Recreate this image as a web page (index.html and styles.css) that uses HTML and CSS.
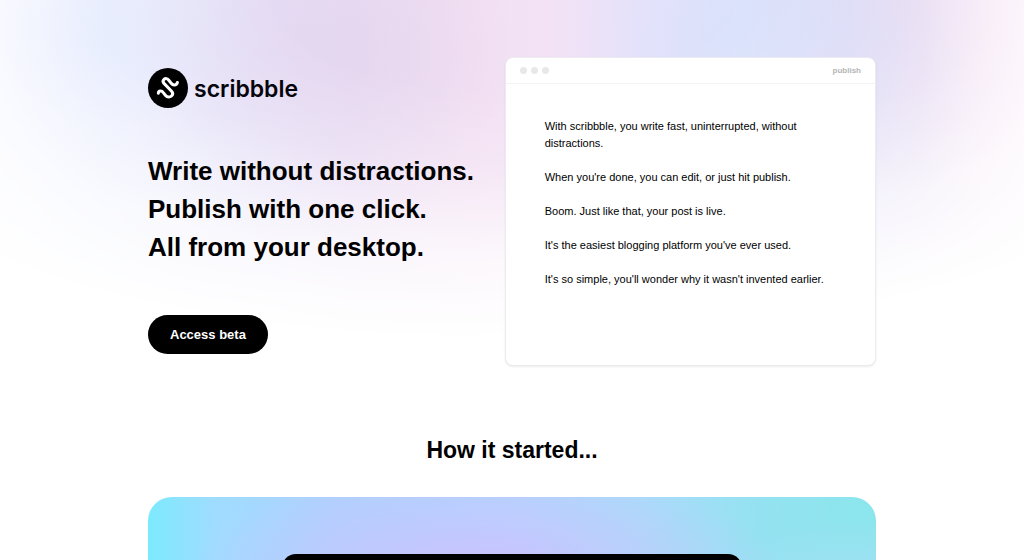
FILE: index.html
```html
<!DOCTYPE html>
<html lang="en">
<head>
<meta charset="utf-8">
<meta name="viewport" content="width=device-width, initial-scale=1">
<title>scribbble</title>
<link rel="stylesheet" href="styles.css">
</head>
<body>
<div class="page">
  <div class="glow" aria-hidden="true"></div>
  <main class="container">
    <section class="hero">
      <div class="intro">
        <div class="brand">
          <svg class="brand-mark" viewBox="0 0 40 40" aria-hidden="true">
            <circle cx="20" cy="20" r="20"/>
            <path d="M10.3 25.2C10.6 22.7 13.6 22.2 15.3 24.6L17.6 27.5C19.3 29.6 22 29.4 23.5 28C25 26.6 25 24.8 23.6 23.2L16 15.4C14.8 14 14.9 12.4 16 11.4C17.4 10.1 19.2 10.4 20.6 12L23.2 15.3C25.2 17.9 28.8 17.3 29.4 14.4"/>
          </svg>
          <span class="brand-name">scribbble</span>
        </div>
        <h1 class="headline">Write without distractions.<br>Publish with one click.<br>All from your desktop.</h1>
        <button class="cta" type="button">Access beta</button>
      </div>
      <article class="window">
        <header class="window-bar">
          <div class="dots"><i></i><i></i><i></i></div>
          <button class="publish" type="button">publish</button>
        </header>
        <div class="window-body">
          <p>With scribbble, you write fast, uninterrupted, without distractions.</p>
          <p>When you're done, you can edit, or just hit publish.</p>
          <p>Boom. Just like that, your post is live.</p>
          <p>It's the easiest blogging platform you've ever used.</p>
          <p>It's so simple, you'll wonder why it wasn't invented earlier.</p>
        </div>
      </article>
    </section>
    <section class="story">
      <h2 class="story-title">How it started...</h2>
      <div class="showcase"><div class="screen"></div></div>
    </section>
  </main>
</div>
</body>
</html>
```
FILE: styles.css
```css
* { box-sizing: border-box; }

body {
  margin: 0;
  height: 100vh;
  overflow: hidden;
  background: #fff;
  color: #000;
  font-family: "Liberation Sans", Arial, sans-serif;
}

h1, h2, p { margin: 0; }

.page {
  position: relative;
  height: 100%;
  overflow: hidden;
}

.glow {
  position: absolute;
  inset: 0 0 auto;
  height: 340px;
  background:
    radial-gradient(ellipse 190px 150px at 32% 50px, rgba(224, 208, 236, 0.5), transparent),
    radial-gradient(ellipse 170px 130px at 73% 50px, rgba(214, 224, 252, 0.4), transparent),
    radial-gradient(ellipse 110px 90px at 10% 40px, rgba(220, 230, 254, 0.5), transparent),
    linear-gradient(90deg, #f3f4ff 0%, #e7ebfd 10%, #e5e2f8 22%, #e9dcf3 34%, #f2dff2 46%, #f3e2f6 54%, #e6e2fa 62%, #dce2fb 72%, #dad8f5 83%, #e3d7f1 90%, #f3e2f4 96%, #f9ebf8 100%);
  -webkit-mask-image: radial-gradient(ellipse 82% 100% at 49% 0, #000 26%, rgba(0, 0, 0, 0.8) 48%, rgba(0, 0, 0, 0.25) 75%, transparent 100%);
  mask-image: radial-gradient(ellipse 82% 100% at 49% 0, #000 26%, rgba(0, 0, 0, 0.8) 48%, rgba(0, 0, 0, 0.25) 75%, transparent 100%);
}

.container {
  position: relative;
  max-width: 760px;
  margin: 0 auto;
  padding: 57px 16px 0;
}

.hero {
  display: grid;
  grid-template-columns: 49fr 51fr;
}

.intro {
  display: flex;
  flex-direction: column;
  align-items: flex-start;
  padding-top: 11px;
}

.brand {
  display: flex;
  align-items: center;
  gap: 6px;
}

.brand-mark {
  width: 40px;
  height: 40px;
}

.brand-mark path {
  fill: none;
  stroke: #fff;
  stroke-width: 3;
  stroke-linecap: round;
  stroke-linejoin: round;
}

.brand-name {
  padding-top: 2px;
  color: #06050c;
  font: 600 23px/30px Inter, sans-serif;
}

.headline {
  margin-top: 44px;
  font-size: 26px;
  line-height: 38px;
  white-space: nowrap;
}

.cta {
  margin-top: 49px;
  padding: 0 22px;
  height: 39px;
  border: 0;
  border-radius: 20px;
  background: #000;
  color: #fff;
  font: 700 13px/38px "Liberation Sans", Arial, sans-serif;
}

.window {
  min-height: 309px;
  border: 1px solid #ececf0;
  border-radius: 8px;
  background: #fff;
  box-shadow: 0 1px 2px rgba(0, 0, 0, 0.08);
}

.window-bar {
  display: flex;
  align-items: center;
  justify-content: space-between;
  height: 26px;
  padding: 0 14px;
  border-bottom: 1px solid #f4f4f4;
}

.dots {
  display: flex;
  gap: 4px;
}

.dots i {
  width: 7px;
  height: 7px;
  border-radius: 50%;
  background: #e8e8e8;
}

.publish {
  padding: 0;
  border: 0;
  background: none;
  color: #b5b5b5;
  font: 700 8px/10px "Liberation Sans", Arial, sans-serif;
}

.window-body {
  display: grid;
  gap: 17px;
  padding: 34px 39px;
  font-size: 11px;
  line-height: 17px;
}

.story {
  margin-top: 67px;
}

.story-title {
  font-size: 23px;
  line-height: 34px;
  text-align: center;
}

.showcase {
  display: flex;
  justify-content: center;
  margin-top: 30px;
  padding: 57px 16px 0;
  border-radius: 24px;
  background:
    radial-gradient(ellipse 300px 110px at 46% 78px, rgba(208, 190, 252, 0.85), transparent),
    radial-gradient(ellipse 170px 70px at 100% 90px, rgba(166, 222, 246, 0.9), transparent),
    linear-gradient(90deg, #7ceafe 0%, #9fdcff 9%, #aed2ff 25%, #b2d5ff 50%, #a9dcfa 68%, #94e2f1 84%, #8be6ec 100%);
}

.screen {
  flex: 0 1 460px;
  height: 240px;
  border-radius: 14px;
  background: #000;
}
```
